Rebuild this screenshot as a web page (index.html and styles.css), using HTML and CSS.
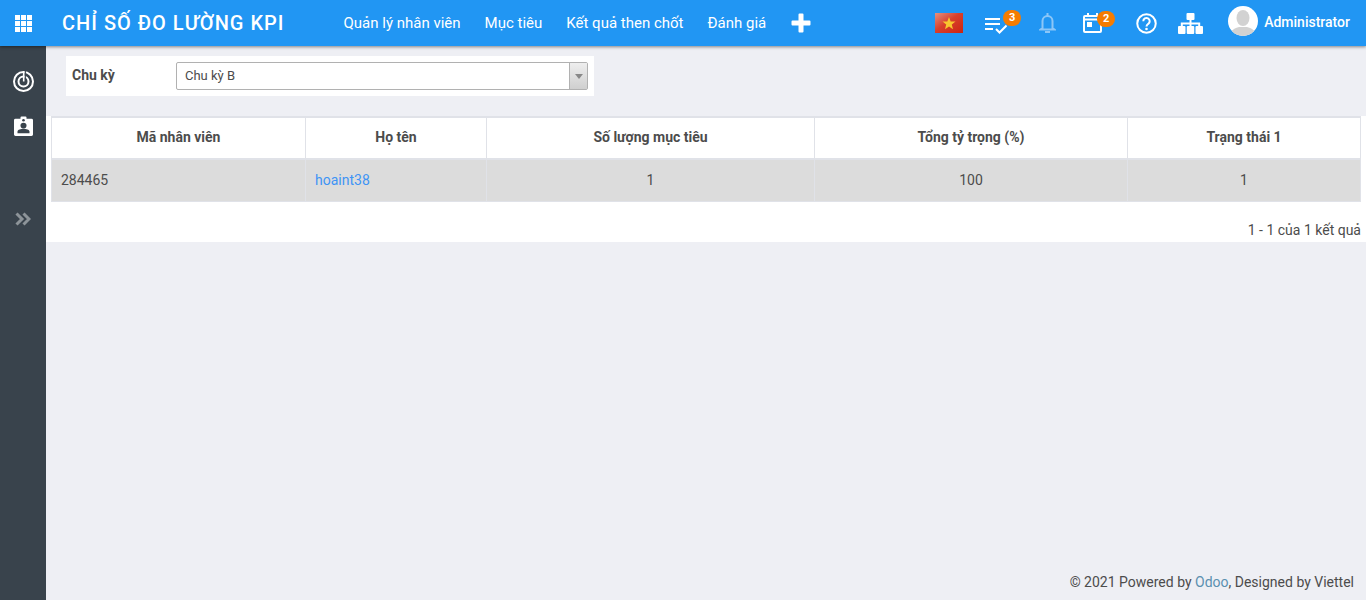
FILE: index.html
```html
<!doctype html>
<html lang="vi">
 <head>
  <meta charset="UTF-8">
  <meta name="viewport" content="width=device-width, initial-scale=1.0">
  <title>Chỉ số đo lường KPI</title>
  <link rel="stylesheet" href="styles.css">
 </head>
 <body>
  <header class="navbar">
   <a class="apps-toggle" href="#">
    <svg width="17" height="17" viewBox="0 0 17 17" fill="#fff"><rect x="0" y="0" width="5" height="5"/><rect x="6" y="0" width="5" height="5"/><rect x="12" y="0" width="5" height="5"/><rect x="0" y="6" width="5" height="5"/><rect x="6" y="6" width="5" height="5"/><rect x="12" y="6" width="5" height="5"/><rect x="0" y="12" width="5" height="5"/><rect x="6" y="12" width="5" height="5"/><rect x="12" y="12" width="5" height="5"/></svg>
   </a>
   <a class="brand" href="#">CHỈ SỐ ĐO LƯỜNG KPI</a>
   <nav class="menu">
    <a href="#">Quản lý nhân viên</a>
    <a href="#">Mục tiêu</a>
    <a href="#">Kết quả then chốt</a>
    <a href="#">Đánh giá</a>
    <a class="menu-plus" href="#">
     <svg width="20" height="20" viewBox="0 0 20 20" fill="#fff"><path d="M7.500 1.500a1 1 0 0 1 1-1h3a1 1 0 0 1 1 1v6h6a1 1 0 0 1 1 1v3a1 1 0 0 1-1 1h-6v6a1 1 0 0 1-1 1h-3a1 1 0 0 1-1-1v-6h-6a1 1 0 0 1-1-1v-3a1 1 0 0 1 1-1h6z"/></svg>
    </a>
   </nav>
   <div class="systray">
    <svg class="flag" width="28" height="20" viewBox="0 0 28 20"><defs><linearGradient id="flag-shine" x1="0" y1="0" x2="1" y2="1"><stop offset="0" stop-color="#e5917f"/><stop offset="0.45" stop-color="#d8402c"/><stop offset="1" stop-color="#cc2412"/></linearGradient></defs><rect width="28" height="20" fill="url(#flag-shine)"/><polygon points="14,4 15.700,8.400 20.500,8.600 16.800,11.600 18,16.200 14,13.600 10,16.200 11.200,11.600 7.500,8.600 12.300,8.400" fill="#f8c62e"/></svg>
    <span class="tray-item tray-todo">
     <svg width="22" height="17" viewBox="0 0 22 17" fill="none" stroke="#fff" stroke-width="2"><path d="M0 2h15M0 7h15M0 12h8"/><path d="M11 12l3.500 3.500 7-7"/></svg>
     <span class="badge badge-todo">3</span>
    </span>
    <svg class="tray-bell" width="17" height="20" viewBox="0 0 17 20" fill="none" stroke="#8cc6f7" stroke-width="2"><path d="M8.500 0v3M3.500 15V8a5 5 0 0 1 10 0v7l2 1.500H1.500z"/><path d="M6 19h5"/></svg>
    <span class="tray-item tray-cal">
     <svg width="19" height="20" viewBox="0 0 19 20" fill="none" stroke="#fff" stroke-width="2"><rect x="1" y="3" width="17" height="16" rx="1"/><path d="M5 0v4M14 0v4M1 6.500h17"/><rect x="4" y="9" width="5" height="5" fill="#fff" stroke="none"/></svg>
     <span class="badge badge-cal">2</span>
    </span>
    <svg class="tray-help" width="21" height="21" viewBox="0 0 21 21" fill="none" stroke="#fff"><circle cx="10.500" cy="10.500" r="9.250" stroke-width="2"/><path d="M7.300 8.200a3.200 3.200 0 1 1 5 2.600c-1.100.8-1.800 1.300-1.800 2.700" stroke-width="2"/><circle cx="10.500" cy="16" r="1.300" fill="#fff" stroke="none"/></svg>
    <svg class="tray-org" width="25" height="21" viewBox="0 0 25 21" fill="#fff"><rect x="8.500" y="0" width="8" height="7" rx="1"/><path d="M12.500 6v8M3.800 14v-3.500h17.400V14" fill="none" stroke="#fff" stroke-width="2"/><rect x="0" y="13" width="7.500" height="8" rx="1"/><rect x="8.750" y="13" width="7.500" height="8" rx="1"/><rect x="17.500" y="13" width="7.500" height="8" rx="1"/></svg>
    <a class="user" href="#">
     <svg class="avatar" width="30" height="30" viewBox="0 0 30 30"><defs><clipPath id="avatar-clip"><circle cx="15" cy="15" r="15"/></clipPath></defs><g clip-path="url(#avatar-clip)"><rect width="30" height="30" fill="#fff"/><ellipse cx="15" cy="12" rx="6.500" ry="8" fill="#d2d2d2"/><path d="M2 30c0-6 5-8 9-9h8c4 1 9 3 9 9z" fill="#d2d2d2"/></g></svg>
     <span class="user-name">Administrator</span>
    </a>
   </div>
  </header>
  <div class="layout">
   <aside class="sidebar">
    <a class="side-icon side-target" href="#">
     <svg width="21" height="21" viewBox="0 0 21 21" fill="none" stroke="#fff" stroke-width="2"><circle cx="10.500" cy="10.500" r="9.500"/><circle cx="10.500" cy="10.500" r="5"/><path d="M12.200 0v10" stroke="#39434c" stroke-width="1.400"/><path d="M10.700 0v10.500" stroke-width="1.600"/></svg>
    </a>
    <a class="side-icon side-badge" href="#">
     <svg width="19" height="20" viewBox="0 0 19 21" preserveAspectRatio="none"><path fill="#fff" d="M1.500 3H6.500V1.500a1 1 0 0 1 1-1h4a1 1 0 0 1 1 1V3h5a1.500 1.500 0 0 1 1.500 1.500v15a1.500 1.500 0 0 1-1.500 1.500h-16A1.500 1.500 0 0 1 0 19.500v-15A1.500 1.500 0 0 1 1.500 3z"/><circle cx="9.500" cy="4.500" r="1.300" fill="#39434c"/><circle cx="9.500" cy="10" r="3" fill="#39434c"/><path d="M3.500 18v-1.500c0-2 3.500-3 6-3s6 1 6 3V18z" fill="#39434c"/></svg>
    </a>
    <a class="side-toggle" href="#">
     <svg width="16" height="14" viewBox="0 0 16 14" fill="none" stroke="#8d9499" stroke-width="3"><path d="M1.500 1.500L7 7l-5.500 5.500M8.500 1.500L14 7l-5.500 5.500"/></svg>
    </a>
   </aside>
   <main class="content">
    <div class="filter">
     <label class="filter-label">Chu kỳ</label>
     <div class="select">
      <span class="select-value">Chu kỳ B</span>
      <span class="select-arrow"></span>
     </div>
    </div>
    <section class="panel">
     <table class="list">
      <thead>
       <tr>
        <th class="col-code">Mã nhân viên</th>
        <th class="col-name">Họ tên</th>
        <th class="col-count">Số lượng mục tiêu</th>
        <th class="col-weight">Tổng tỷ trọng (%)</th>
        <th>Trạng thái 1</th>
       </tr>
      </thead>
      <tbody>
       <tr>
        <td>284465</td>
        <td><a href="#">hoaint38</a></td>
        <td class="num">1</td>
        <td class="num">100</td>
        <td class="num">1</td>
       </tr>
      </tbody>
     </table>
     <p class="pager">1 - 1 của 1 kết quả</p>
    </section>
    <footer class="footer">© 2021 Powered by <a href="#">Odoo</a>, Designed by Viettel</footer>
   </main>
  </div>
 </body>
</html>
```

FILE: styles.css
```css
* {
    box-sizing: border-box;
}
html, body {
    height: 100%;
}
body {
    margin: 0;
    display: flex;
    flex-direction: column;
    overflow: hidden;
    font-family: Roboto, Arial, sans-serif;
    font-size: 14px;
    color: #4c4c4c;
    background-color: #eeeff4;
}
a {
    text-decoration: none;
}
.navbar {
    display: flex;
    align-items: center;
    flex: 0 0 46px;
    height: 46px;
    background-color: #2196f3;
    box-shadow: 0 1px 3px rgba(0,0,0,0.45);
    position: relative;
    z-index: 2;
    color: #fff;
}
.navbar a {
    color: #fff;
}
.apps-toggle {
    display: flex;
    margin-left: 15px;
}
.brand {
    margin-left: 30px;
    width: 281.5px;
    font-size: 20px;
    font-weight: 500;
    letter-spacing: 1px;
    white-space: nowrap;
}
.menu {
    display: flex;
    align-items: center;
    gap: 24px;
    font-size: 15px;
}
.menu-plus {
    display: flex;
    margin-left: 1px;
}
.systray {
    display: flex;
    align-items: center;
    margin-left: auto;
    padding-right: 16px;
}
.flag {
    margin-right: 22px;
}
.tray-item {
    display: flex;
    position: relative;
}
.tray-todo {
    margin-top: 5px;
}
.badge {
    position: absolute;
    height: 16px;
    min-width: 18px;
    border-radius: 8px;
    background-color: #f57c00;
    color: #fff;
    font-size: 11px;
    font-weight: 700;
    line-height: 16px;
    text-align: center;
}
.badge-todo {
    top: -7px;
    left: 18px;
}
.badge-cal {
    top: -2px;
    left: 14px;
}
.tray-bell {
    margin: 0 27px 0 32px;
}
.tray-help {
    margin: 0 21px 0 34px;
}
.tray-org {
    margin-right: 25px;
}
.user {
    display: flex;
    align-items: center;
    gap: 6px;
    font-size: 14px;
    font-weight: 500;
}
.avatar {
    margin-bottom: 4px;
}
.user-name {
    margin-bottom: 2px;
}
.layout {
    display: flex;
    flex: 1;
    min-height: 0;
}
.sidebar {
    display: flex;
    flex-direction: column;
    align-items: center;
    flex: 0 0 46px;
    padding-top: 25px;
    background-color: #39434c;
}
.side-icon, .side-toggle {
    display: flex;
}
.side-badge {
    margin-top: 24px;
}
.side-toggle {
    margin-top: 76px;
}
.content {
    display: flex;
    flex-direction: column;
    flex: 1;
    min-width: 0;
}
.filter {
    display: flex;
    align-items: center;
    width: 528px;
    height: 40px;
    margin: 10px 0 0 20px;
    padding: 0 6px;
    background-color: #fff;
}
.filter-label {
    width: 104px;
    padding-bottom: 2px;
    font-size: 14px;
    font-weight: 700;
}
.select {
    display: flex;
    align-items: center;
    justify-content: space-between;
    width: 412px;
    height: 28px;
    padding-left: 8px;
    border: 1px solid #b1b1b1;
    border-radius: 2px;
    background-color: #fff;
    font-size: 13px;
}
.select-value {
    padding-bottom: 2px;
}
.select-arrow {
    position: relative;
    width: 18px;
    height: 26px;
    border-left: 1px solid #b1b1b1;
    background: linear-gradient(#eeeeee, #cfcfcf);
}
.select-arrow::after {
    content: "";
    position: absolute;
    left: 5px;
    top: 11px;
    border: 4px solid transparent;
    border-top: 5px solid #888;
    border-bottom: 0;
}
.panel {
    margin-top: 20px;
    padding: 0 5px;
    background-color: #fff;
}
.list {
    width: 100%;
    table-layout: fixed;
    border-collapse: collapse;
}
.list th, .list td {
    border: 1px solid #e0e2e8;
    text-align: center;
}
.list th {
    height: 42px;
    padding-bottom: 3px;
    border-top-width: 2px;
    border-bottom-width: 2px;
    font-weight: 700;
    font-size: 14px;
}
.list td {
    height: 42px;
    padding: 0 9px;
    background-color: #dcdcdc;
    font-size: 14px;
}
.list td:nth-child(-n+2) {
    text-align: left;
}
.list td a {
    color: #3f94f5;
}
.col-code {
    width: 254px;
}
.col-name {
    width: 181px;
}
.col-count {
    width: 328px;
}
.col-weight {
    width: 313px;
}
.pager {
    margin: 0;
    height: 40px;
    padding-top: 20px;
    text-align: right;
    line-height: 16px;
}
.footer {
    margin-top: auto;
    padding: 0 12px 10px 0;
    text-align: right;
    line-height: 16px;
}
.footer a {
    color: #5b8fb0;
}
```
